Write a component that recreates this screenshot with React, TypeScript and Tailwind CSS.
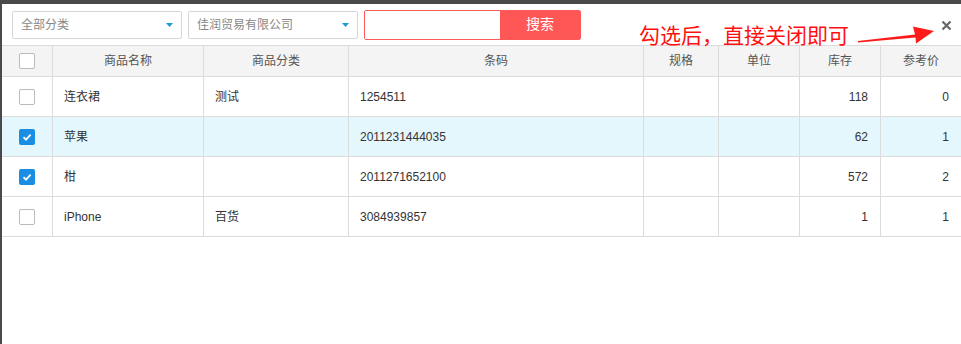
import React from 'react'

type Row = {
  name: string
  category: string
  barcode: string
  spec: string
  unit: string
  stock: string
  price: string
  checked: boolean
}

const rows: Row[] = [
  { name: '连衣裙', category: '测试', barcode: '1254511', spec: '', unit: '', stock: '118', price: '0', checked: false },
  { name: '苹果', category: '', barcode: '2011231444035', spec: '', unit: '', stock: '62', price: '1', checked: true },
  { name: '柑', category: '', barcode: '2011271652100', spec: '', unit: '', stock: '572', price: '2', checked: true },
  { name: 'iPhone', category: '百货', barcode: '3084939857', spec: '', unit: '', stock: '1', price: '1', checked: false },
]

const font = { fontFamily: '"Liberation Sans", "Noto Sans CJK SC", sans-serif' }

function Checkbox({ checked }: { checked: boolean }) {
  if (checked) {
    return (
      <span className="w-4 h-4 rounded-[2px] bg-[#1a8ee2] flex items-center justify-center">
        <svg width="10" height="10" viewBox="0 0 10 10">
          <path d="M1.5 5.2 L4 7.6 L8.6 2.6" fill="none" stroke="#fff" strokeWidth="1.8" />
        </svg>
      </span>
    )
  }
  return <span className="w-4 h-4 rounded-[2px] border border-[#bbb] bg-white" />
}

function Select({ label, width }: { label: string; width: string }) {
  return (
    <div
      className={`${width} h-[28px] border border-[#d6d6d6] rounded-[2px] bg-white flex items-center justify-between pl-[8px] pr-[8px]`}
    >
      <span className="text-[12px] text-[#888]">{label}</span>
      <svg width="7" height="4" viewBox="0 0 7 4">
        <path d="M0 0 L7 0 L3.5 4 Z" fill="#1a9bd5" />
      </svg>
    </div>
  )
}

const cols = ['w-[51px]', 'w-[151px]', 'w-[145px]', 'w-[295px]', 'w-[75px]', 'w-[81px]', 'w-[81px]', 'w-[80px]']
const headers = ['', '商品名称', '商品分类', '条码', '规格', '单位', '库存', '参考价']

export default function App() {
  return (
    <div className="w-[961px] h-[344px] bg-[#4a4a4a] pt-[4px] pl-[2px] overflow-hidden" style={font}>
      <div className="relative w-full h-full bg-white">
        {/* toolbar */}
        <div className="h-[41px] flex items-center pl-[10px] gap-[6px]">
          <Select label="全部分类" width="w-[170px]" />
          <Select label="佳润贸易有限公司" width="w-[170px]" />
          <div className="h-[30px] w-[217px] border border-[#ff5a5a] rounded-[2px] flex">
            <div className="flex-1 bg-white" />
            <button className="w-[80px] h-full bg-[#ff5656] text-white text-[14px]">搜索</button>
          </div>
        </div>

        {/* annotation */}
        <div className="absolute left-[637px] top-[19px] text-[21px] leading-[26px] text-[#ff1010]">
          勾选后，直接关闭即可
        </div>
        <svg className="absolute left-[853px] top-[18px]" width="84" height="26" viewBox="0 0 84 26">
          <path d="M3 19 L60 12.5 L58 4.5 L79 9 L61 21.5 L60.5 15.5 L3 20.5 Z" fill="#ff1a1a" />
        </svg>
        <svg className="absolute left-[939px] top-[16px]" width="11" height="11" viewBox="0 0 11 11">
          <path d="M1.5 1.5 L9.5 9.5 M9.5 1.5 L1.5 9.5" stroke="#666" strokeWidth="2.2" />
        </svg>

        {/* table */}
        <div className="border-t border-[#dcdcdc]">
          <div className="flex h-[31px] bg-[#f4f4f4] border-b border-[#dcdcdc]">
            {headers.map((h, i) => (
              <div
                key={i}
                className={`${cols[i]} shrink-0 flex items-center justify-center text-[12px] text-[#555] ${i < 7 ? 'border-r border-[#dcdcdc]' : ''}`}
              >
                {i === 0 ? <Checkbox checked={false} /> : h}
              </div>
            ))}
          </div>
          {rows.map((r, ri) => {
            const cells = [r.name, r.category, r.barcode, r.spec, r.unit, r.stock, r.price]
            return (
              <div
                key={ri}
                className={`flex h-[40px] border-b border-[#dcdcdc] ${ri === 1 ? 'bg-[#e4f7fd]' : 'bg-white'}`}
              >
                <div className={`${cols[0]} shrink-0 flex items-center justify-center border-r border-[#dcdcdc]`}>
                  <Checkbox checked={r.checked} />
                </div>
                {cells.map((c, ci) => (
                  <div
                    key={ci}
                    className={`${cols[ci + 1]} shrink-0 flex items-center text-[12px] text-[#333] ${
                      ci >= 5 ? 'justify-end pr-[12px]' : 'pl-[11px]'
                    } ${ci < 6 ? 'border-r border-[#dcdcdc]' : ''}`}
                  >
                    {c}
                  </div>
                ))}
              </div>
            )
          })}
        </div>
      </div>
    </div>
  )
}
